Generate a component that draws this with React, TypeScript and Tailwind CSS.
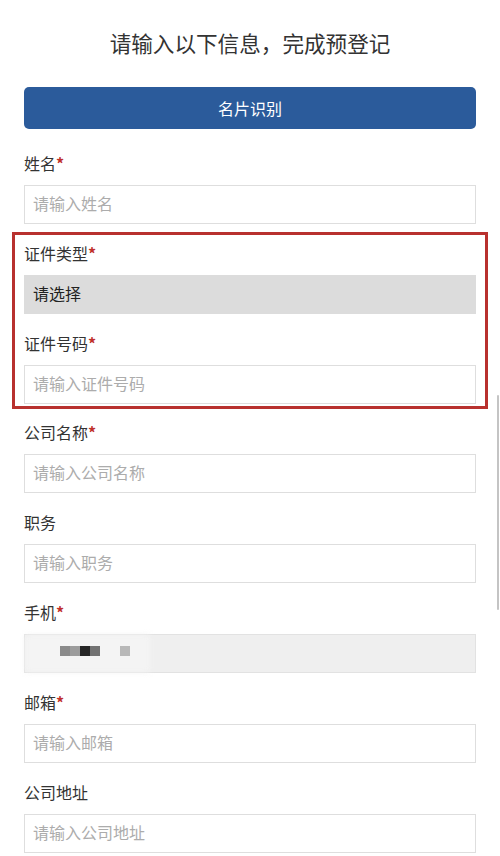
import React from "react";

const font = { fontFamily: '"Noto Sans CJK SC", "Noto Sans", sans-serif' };

function Label({ text, required }: { text: string; required?: boolean }) {
  return (
    <div className="h-6 leading-6 text-[16px] text-[#333] mb-[10px]">
      {text}
      {required && <span className="text-[#c0302b] font-bold">*</span>}
    </div>
  );
}

function TextField({
  label,
  placeholder,
  required,
  className = "mb-[17px]",
}: {
  label: string;
  placeholder: string;
  required?: boolean;
  className?: string;
}) {
  return (
    <div className={className}>
      <Label text={label} required={required} />
      <input
        placeholder={placeholder}
        className="block w-full h-[39px] border border-[#dedede] bg-white px-[8px] pb-[3px] text-[16px] text-[#333] placeholder:text-[#acacac] outline-none"
        style={font}
      />
    </div>
  );
}

function PhoneField() {
  const blocks = ["#8a8a8a", "#9c9c9c", "#262626", "#727272"];
  return (
    <div className="mb-[17px]">
      <Label text="手机" required />
      <div className="relative h-[39px] border border-[#e2e2e2] bg-[#efefef]">
        <div className="absolute left-0 top-0 h-full w-[125px] bg-[#f4f4f4] blur-[3px]" />
        <div className="absolute left-[35px] top-[11px] flex">
          {blocks.map((c, i) => (
            <div key={i} className="w-[10px] h-[10px]" style={{ background: c }} />
          ))}
          <div className="w-[10px] h-[10px] ml-[20px] bg-[#b8b8b8]" />
        </div>
      </div>
    </div>
  );
}

export default function App() {
  return (
    <main className="relative min-h-screen bg-white px-6 pt-[28px]" style={font}>
      <h1 className="text-center text-[21.6px] leading-[30px] text-[#333] mb-[29px]">
        请输入以下信息，完成预登记
      </h1>

      <button className="block w-full h-[42px] rounded-[5px] bg-[#2b5b9b] text-white text-[16px] mb-[22px]">
        名片识别
      </button>

      <TextField label="姓名" placeholder="请输入姓名" required className="mb-[8px]" />

      <div className="-mx-3 border-[3px] border-[#b8312e] px-[9px] pt-[6px] pb-[2px] mb-[11px]">
        <div className="mb-[17px]">
          <Label text="证件类型" required />
          <div className="h-[39px] bg-[#dcdcdc] px-[9px] leading-[36px] text-[16px] text-[#222]">
            请选择
          </div>
        </div>
        <TextField label="证件号码" placeholder="请输入证件号码" required className="" />
      </div>

      <TextField label="公司名称" placeholder="请输入公司名称" required />
      <TextField label="职务" placeholder="请输入职务" />
      <PhoneField />
      <TextField label="邮箱" placeholder="请输入邮箱" required />
      <TextField label="公司地址" placeholder="请输入公司地址" />

      <div className="absolute right-[1px] top-[395px] h-[215px] w-[2px] rounded-full bg-[#c4c4c4]" />
    </main>
  );
}
